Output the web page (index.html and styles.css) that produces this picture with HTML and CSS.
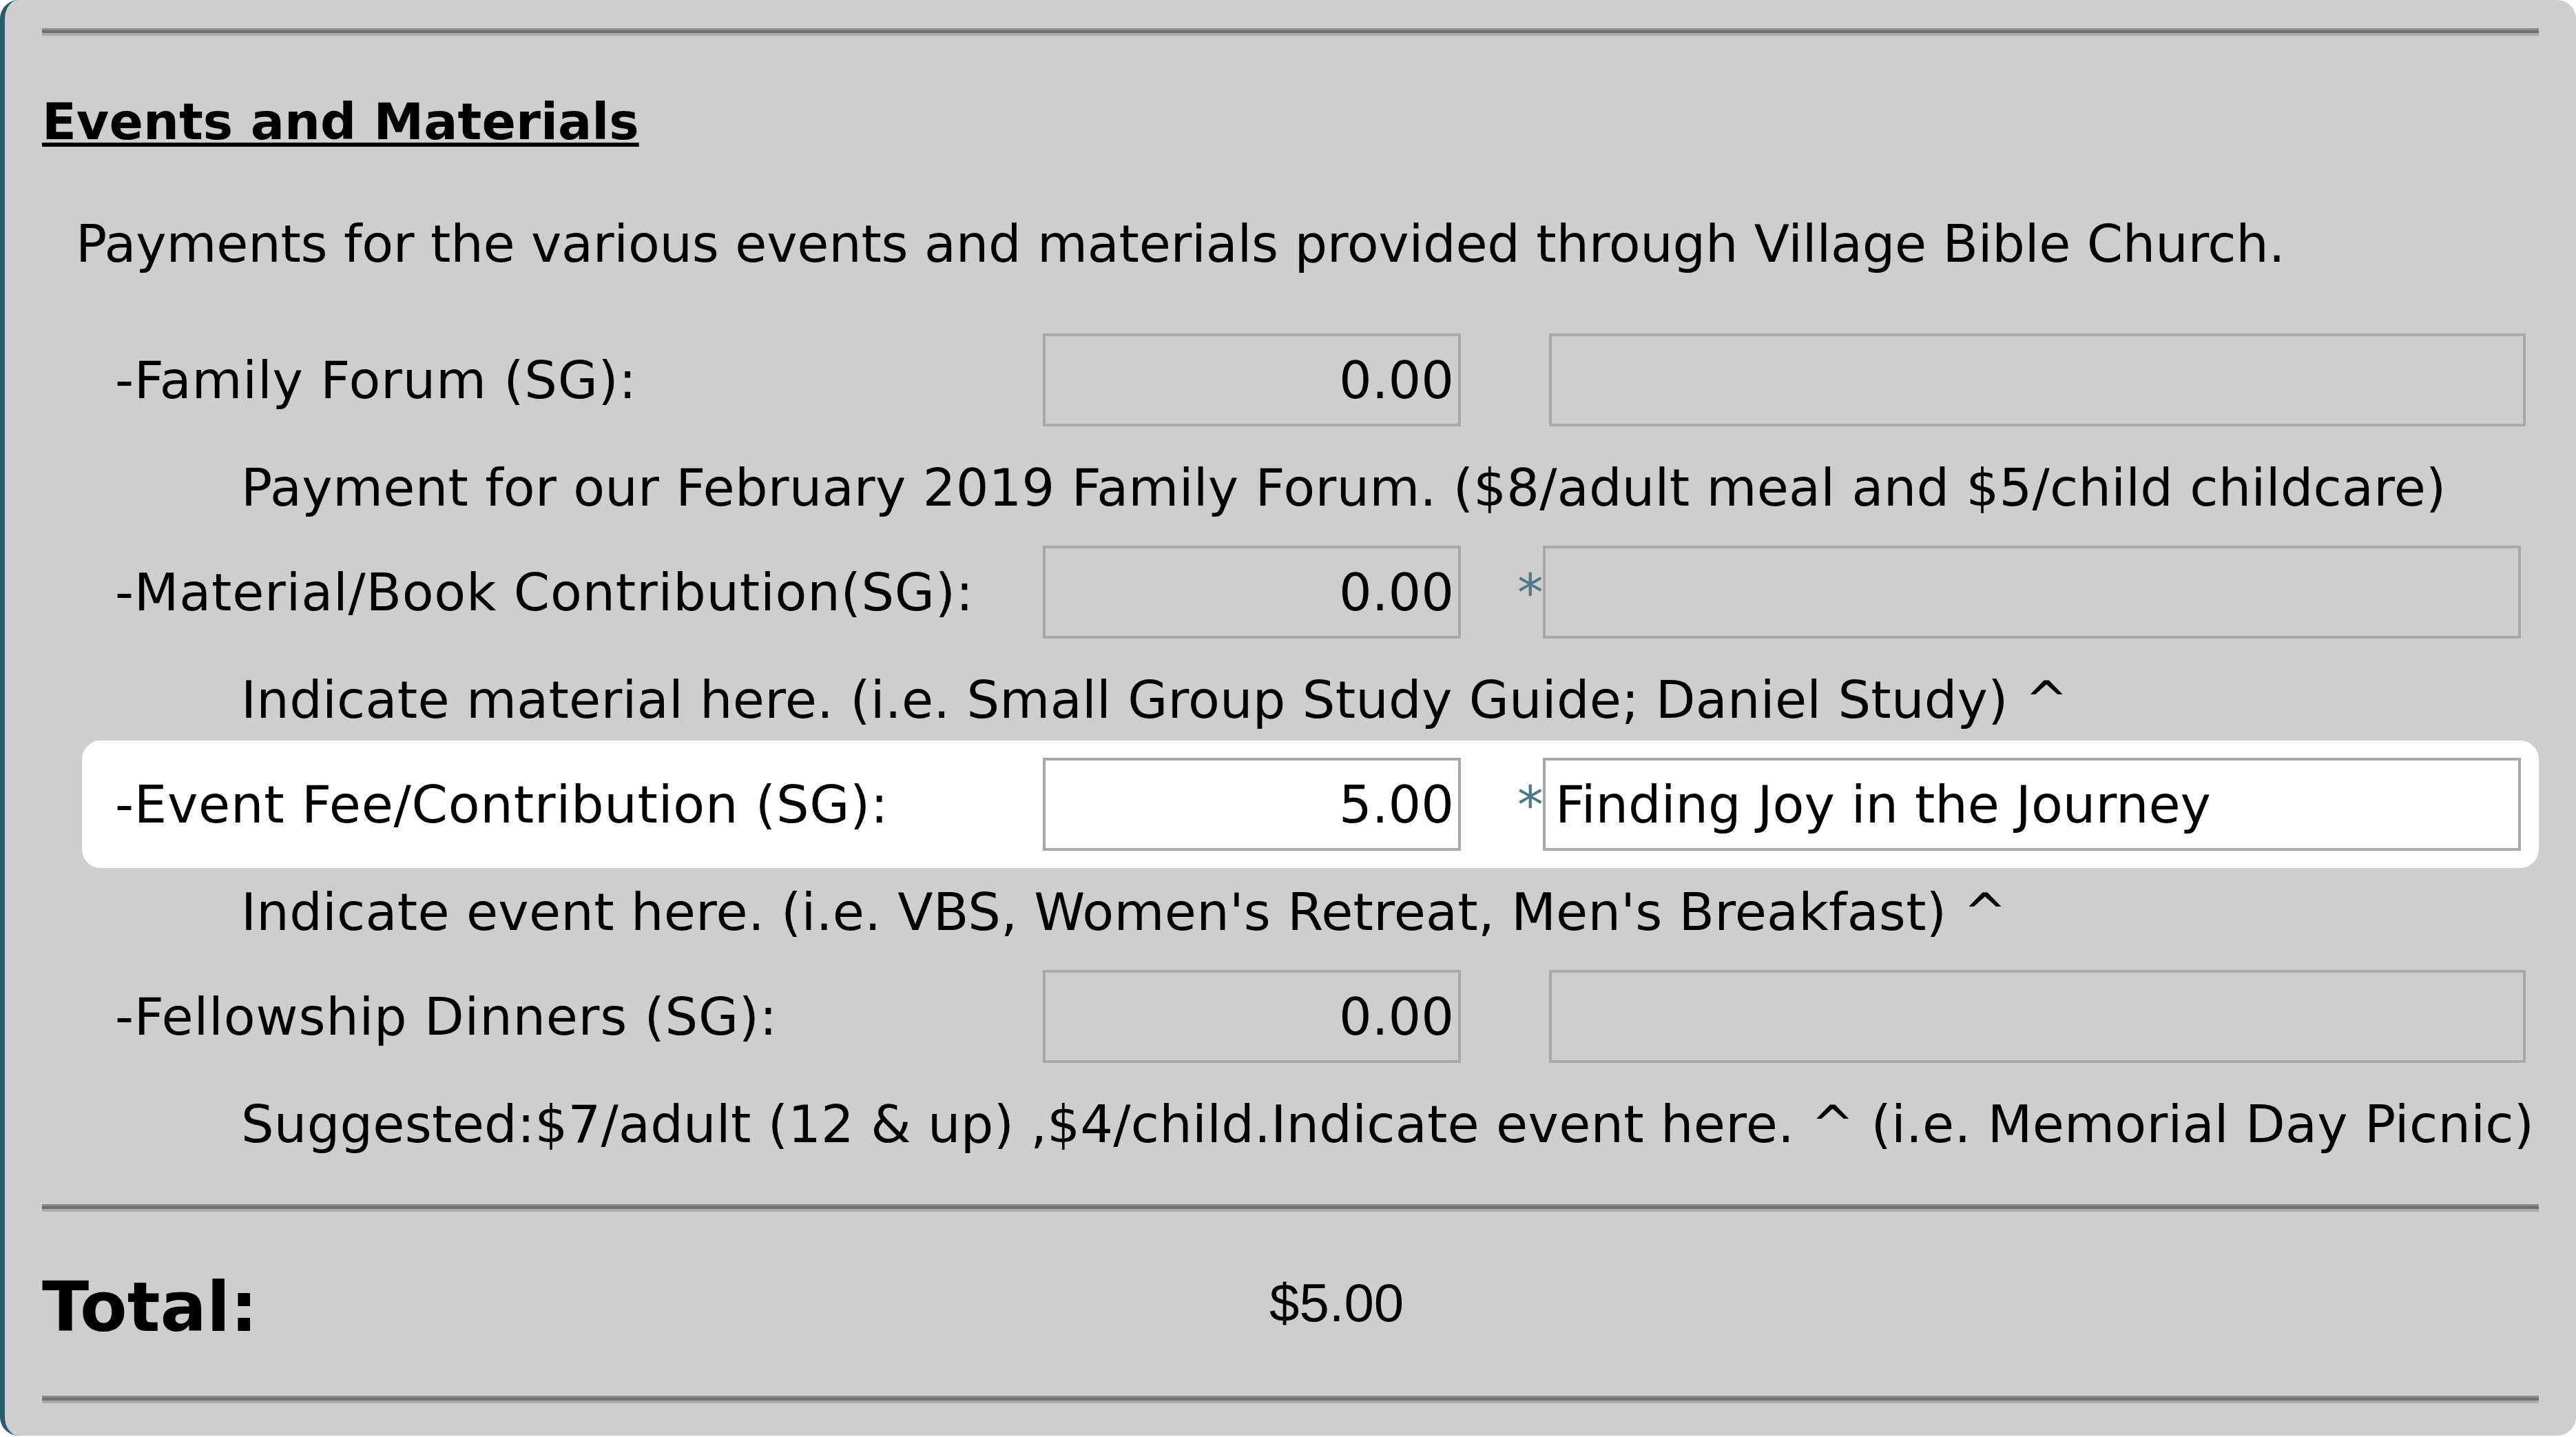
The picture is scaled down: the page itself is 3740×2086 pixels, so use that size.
FILE: index.html
```html
<!DOCTYPE html>
<html lang="en">
<head>
<meta charset="utf-8">
<title>Events and Materials</title>
<link rel="stylesheet" href="styles.css">
</head>
<body>
<div class="panel">
  <hr class="rule">
  <h2 class="title">Events and Materials</h2>
  <p class="intro">Payments for the various events and materials provided through Village Bible Church.</p>

  <div class="fields">
    <div class="field">
      <div class="entry no-star">
        <span class="label">-Family Forum (SG):</span>
        <input class="field-input amount" type="text" readonly value="0.00">
        <span class="star"></span>
        <input class="field-input note-input" type="text" readonly value="">
      </div>
      <div class="desc">Payment for our February 2019 Family Forum. ($8/adult meal and $5/child childcare)</div>
    </div>

    <div class="field">
      <div class="entry">
        <span class="label">-Material/Book Contribution(SG):</span>
        <input class="field-input amount" type="text" readonly value="0.00">
        <span class="star">*</span>
        <input class="field-input note-input" type="text" readonly value="">
      </div>
      <div class="desc">Indicate material here. (i.e. Small Group Study Guide; Daniel Study) ^</div>
    </div>

    <div class="field">
      <div class="entry is-active">
        <span class="label">-Event Fee/Contribution (SG):</span>
        <input class="field-input amount" type="text" value="5.00">
        <span class="star">*</span>
        <input class="field-input note-input" type="text" value="Finding Joy in the Journey">
      </div>
      <div class="desc">Indicate event here. (i.e. VBS, Women's Retreat, Men's Breakfast) ^</div>
    </div>

    <div class="field">
      <div class="entry no-star">
        <span class="label">-Fellowship Dinners (SG):</span>
        <input class="field-input amount" type="text" readonly value="0.00">
        <span class="star"></span>
        <input class="field-input note-input" type="text" readonly value="">
      </div>
      <div class="desc">Suggested:$7/adult (12 &amp; up) ,$4/child.Indicate event here. ^ (i.e. Memorial Day Picnic)</div>
    </div>
  </div>

  <hr class="rule rule-mid">
  <div class="total">
    <span class="total-label">Total:</span>
    <span class="total-value">$5.00</span>
  </div>
  <hr class="rule rule-end">
</div>
</body>
</html>
```

FILE: styles.css
```css
* { box-sizing: border-box; }

html, body {
  margin: 0;
  padding: 0;
  background: #ffffff;
}

body {
  font-family: "DejaVu Sans", Verdana, sans-serif;
  color: #000;
}

.panel {
  width: 3740px;
  background: #cfcdce;
  border-left: 7px solid #265d6d;
  border-radius: 27px;
  padding: 41px 54px 47px 54px;
}

.rule {
  display: block;
  height: 11px;
  margin: 0;
  border: 0;
  background: linear-gradient(#8a8a8a 0 3px, #707070 3px 7px, #ababab 7px 11px);
}

.title {
  margin: 81px 0 0 0;
  font-size: 73px;
  line-height: 88px;
  font-weight: 700;
  text-decoration: underline;
  text-decoration-thickness: 6px;
  text-underline-offset: 5px;
  white-space: nowrap;
}

.intro {
  margin: 89px 0 0 49px;
  font-size: 75px;
  line-height: 88px;
  letter-spacing: -0.25px;
  white-space: nowrap;
}

.fields {
  margin-top: 61px;
}

.field + .field {
  margin-top: 15px;
}

.entry {
  display: flex;
  align-items: center;
  margin-left: 58px;
  padding: 25px 26px 25px 48px;
  border-radius: 27px;
}

.entry.is-active {
  background: #ffffff;
}

.label {
  flex: none;
  width: 1347px;
  font-size: 75px;
  line-height: 88px;
  letter-spacing: 0.75px;
  white-space: nowrap;
}

.field-input {
  flex: none;
  height: 135px;
  margin: 0;
  border: 4px solid #a8a8a8;
  border-radius: 0;
  background: transparent;
  color: #000;
  font-family: "DejaVu Sans", Verdana, sans-serif;
  font-size: 75px;
  letter-spacing: 0;
  padding: 0 6px;
  outline: none;
}

.is-active .field-input {
  background: #ffffff;
}

.amount {
  width: 607px;
  text-align: right;
}

.star {
  flex: none;
  width: 37px;
  margin-left: 82px;
  text-align: right;
  color: #4a7885;
  font-size: 75px;
  line-height: 88px;
}

.note-input {
  width: 1420px;
  padding-left: 14px;
}

.no-star .note-input {
  margin-left: 9px;
  width: 1418px;
}

.desc {
  margin: 20px 0 0 289px;
  font-size: 75px;
  line-height: 88px;
  letter-spacing: 0.25px;
  white-space: nowrap;
}

.rule-mid {
  margin-top: 72px;
}

.total {
  display: flex;
  align-items: flex-start;
  margin-top: 81.4px;
}

.total-label {
  flex: none;
  width: 1782px;
  font-weight: 700;
  font-size: 100px;
  line-height: 116px;
  letter-spacing: 0;
}

.total-value {
  margin-top: 5.6px;
  font-family: "Liberation Sans", Arial, sans-serif;
  font-size: 78px;
  line-height: 90px;
}

.rule-end {
  margin-top: 70px;
}
```
